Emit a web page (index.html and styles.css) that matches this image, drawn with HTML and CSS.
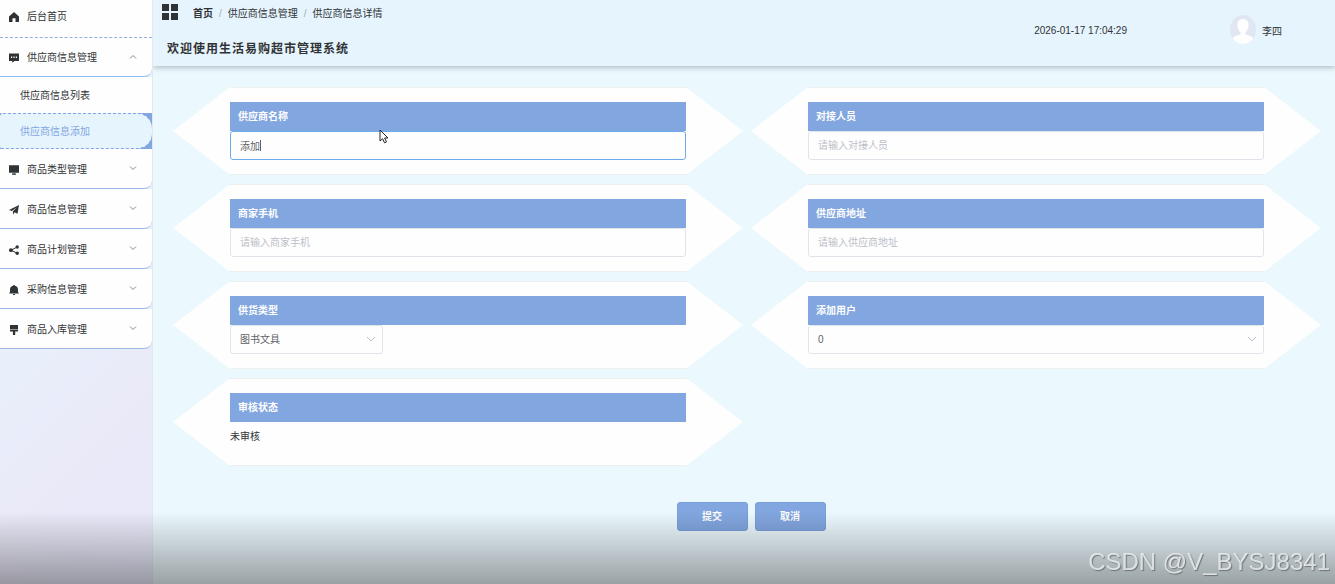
FILE: index.html
```html
<!DOCTYPE html>
<html lang="zh-CN">
<head>
<meta charset="utf-8">
<title>生活易购超市管理系统</title>
<link rel="stylesheet" href="styles.css">
</head>
<body>
<div class="app">
  <aside class="sidebar">
    <nav class="menu">
      <a class="menu-item menu-home" href="#">
        <svg class="menu-icon" viewBox="0 0 10 10"><path d="M5 0 10 4.600V10H6.500V6.300H3.500V10H0V4.600Z"/></svg>
        <span>后台首页</span>
      </a>
      <button class="menu-item menu-group is-open" type="button">
        <svg class="menu-icon" viewBox="0 0 10 10"><path fill-rule="evenodd" d="M0 .5H10V8H5.500L3.200 9.800V8H0ZM2 3.500V5H3.200V3.500ZM4.400 3.500V5H5.600V3.500ZM6.800 3.500V5H8V3.500Z"/></svg>
        <span>供应商信息管理</span>
        <svg class="chevron" viewBox="0 0 8 8"><path d="M1 5.500 4 2.500 7 5.500"/></svg>
      </button>
      <a class="sub-item" href="#">供应商信息列表</a>
      <div class="sub-active"><a class="sub-item" href="#">供应商信息添加</a></div>
      <button class="menu-item menu-group" type="button">
        <svg class="menu-icon" viewBox="0 0 10 10"><path d="M0 .3H10V7.800H0ZM3.500 8.300H6.500L7.200 9.800H2.800Z"/></svg>
        <span>商品类型管理</span>
        <svg class="chevron" viewBox="0 0 8 8"><path d="M1 2.500 4 5.500 7 2.500"/></svg>
      </button>
      <button class="menu-item menu-group" type="button">
        <svg class="menu-icon" viewBox="0 0 10 10"><path d="M10 0 8.500 8.800 5.500 7.200 4.200 9.800 3.800 6.500 8 2.300 2.900 6 0 5Z"/></svg>
        <span>商品信息管理</span>
        <svg class="chevron" viewBox="0 0 8 8"><path d="M1 2.500 4 5.500 7 2.500"/></svg>
      </button>
      <button class="menu-item menu-group" type="button">
        <svg class="menu-icon" viewBox="0 0 10 10"><path d="M8.200 2 2 5.200 8.200 8.200" fill="none" stroke="#303335"/><circle cx="8.200" cy="2" r="1.700"/><circle cx="1.900" cy="5.200" r="1.900"/><circle cx="8.200" cy="8.200" r="1.700"/></svg>
        <span>商品计划管理</span>
        <svg class="chevron" viewBox="0 0 8 8"><path d="M1 2.500 4 5.500 7 2.500"/></svg>
      </button>
      <button class="menu-item menu-group" type="button">
        <svg class="menu-icon" viewBox="0 0 10 10"><path d="M4.300 0H5.700V.8C8 1.200 9 2.800 9 4.500V7L10 8.500H0L1 7V4.500C1 2.800 2 1.200 4.300 .8ZM3.700 9H6.300L5.700 10H4.300Z"/></svg>
        <span>采购信息管理</span>
        <svg class="chevron" viewBox="0 0 8 8"><path d="M1 2.500 4 5.500 7 2.500"/></svg>
      </button>
      <button class="menu-item menu-group" type="button">
        <svg class="menu-icon" viewBox="0 0 10 10"><path d="M1 0H9V4H1ZM1 4.600H9V6.600H6.200V10H3.900V6.600H1Z"/></svg>
        <span>商品入库管理</span>
        <svg class="chevron" viewBox="0 0 8 8"><path d="M1 2.500 4 5.500 7 2.500"/></svg>
      </button>
    </nav>
  </aside>

  <div class="page">
    <header class="header">
      <div class="header-left">
        <div class="crumb-row">
          <svg class="grid-icon" viewBox="0 0 16 16"><path d="M0 0H7V7H0ZM9 0H16V7H9ZM0 9H7V16H0ZM9 9H16V16H9Z"/></svg>
          <nav class="crumbs">
            <a class="crumb-home" href="#">首页</a><span class="slash">/</span><a href="#">供应商信息管理</a><span class="slash">/</span><span>供应商信息详情</span>
          </nav>
        </div>
        <h1 class="title">欢迎使用生活易购超市管理系统</h1>
      </div>
      <time class="clock">2026-01-17 17:04:29</time>
      <div class="user">
        <svg class="avatar" viewBox="0 0 26 29"><ellipse cx="13" cy="14.500" rx="13" ry="14.500" fill="#e1e6f3"/><path fill="#fefefe" d="M13 4C17 4 19 7 18.500 11C18.300 14 17 16 15.500 17.500V19.500C18.500 20.500 22 20.700 23.200 23.700C20.500 27 17 29 13 29S5.500 27 2.800 23.700C4 20.700 7.500 20.500 10.500 19.500V17.500C9 16 7.700 14 7.500 11C7 7 9 4 13 4Z"/></svg>
        <span class="user-name">李四</span>
      </div>
    </header>

    <main class="content">
      <form>
        <div class="form-grid">
          <div class="card">
            <label class="label" for="name">供应商名称</label>
            <div class="field">
              <input class="control is-focus" id="name" type="text" value="添加">
              <span class="caret"></span>
              <svg class="pointer" viewBox="0 0 10 15"><path d="M1 1V12L3.600 9.700 5.500 13.800 7.500 12.900 5.600 9H9Z" fill="#fff" stroke="#222"/></svg>
            </div>
          </div>
          <div class="card">
            <label class="label" for="contact">对接人员</label>
            <div class="field"><input class="control" id="contact" type="text" placeholder="请输入对接人员"></div>
          </div>
          <div class="card">
            <label class="label" for="phone">商家手机</label>
            <div class="field"><input class="control" id="phone" type="text" placeholder="请输入商家手机"></div>
          </div>
          <div class="card">
            <label class="label" for="address">供应商地址</label>
            <div class="field"><input class="control" id="address" type="text" placeholder="请输入供应商地址"></div>
          </div>
          <div class="card">
            <label class="label" for="type">供货类型</label>
            <div class="field field-short">
              <select class="control" id="type"><option>图书文具</option></select>
              <svg class="select-arrow" viewBox="0 0 8 8"><path d="M0 2 4 6 8 2"/></svg>
            </div>
          </div>
          <div class="card">
            <label class="label" for="creator">添加用户</label>
            <div class="field">
              <select class="control" id="creator"><option>0</option></select>
              <svg class="select-arrow" viewBox="0 0 8 8"><path d="M0 2 4 6 8 2"/></svg>
            </div>
          </div>
          <div class="card">
            <label class="label" for="status">审核状态</label>
            <output class="status" id="status">未审核</output>
          </div>
        </div>
        <div class="actions">
          <button class="btn" type="submit">提交</button>
          <button class="btn" type="button">取消</button>
        </div>
      </form>
    </main>
  </div>
</div>
<div class="shade"></div>
<div class="watermark">CSDN @V_BYSJ8341</div>
</body>
</html>
```

FILE: styles.css
```css
* {
  box-sizing: border-box;
}

body {
  margin: 0;
  background: #ebf8fd;
  color: #303335;
  font: 10px/16px "Liberation Sans", "Noto Sans CJK SC", sans-serif;
}

a {
  color: inherit;
  text-decoration: none;
}

button,
input,
select {
  font: inherit;
  color: inherit;
}

.app {
  display: flex;
  min-height: 100vh;
}

/* Sidebar */
.sidebar {
  position: relative;
  z-index: 1;
  flex: 0 0 153px;
  border-right: 1px solid #e2e8ec;
  background: linear-gradient(135deg, #e6f3fc 0%, #e8effb 50%, #eae9f8 75%, #e8e9fb 100%);
}

.menu {
  display: flex;
  flex-direction: column;
}

.menu-item {
  display: flex;
  align-items: center;
  gap: 8px;
  width: 100%;
  padding: 2px 15px 0 9px;
  background: #fefefe;
  text-align: left;
}

.menu-home {
  height: 38px;
  padding-bottom: 5px;
  border-bottom: 1px dashed #93aede;
}

.menu-group {
  height: 40px;
  border: 0;
  border-bottom: 1px solid #9db9e3;
  border-radius: 0 0 8px 0;
}

.is-open {
  height: 39px;
  border-bottom-color: #8cbcf0;
}

.menu-icon {
  width: 10px;
  height: 10px;
  fill: #303335;
}

.chevron {
  width: 8px;
  height: 8px;
  margin: 0 0 3px auto;
  fill: none;
  stroke: #85898e;
}

.sub-item {
  display: flex;
  align-items: center;
  height: 36px;
  padding: 2px 0 0 20px;
  background: #fefefe;
}

.sub-active {
  background: #82a6df;
}

.sub-active .sub-item {
  border: 1px dashed #82a6df;
  border-width: 1px 0;
  border-radius: 3px 15px 15px 3px;
  background: #e6f4fe;
  color: #82a6df;
}

/* Header */
.page {
  flex: 1;
  min-width: 0;
}

.header {
  display: flex;
  padding: 4px 53px 7px 9px;
  background: #e6f4fd;
  box-shadow: 0 1px 6px rgba(0, 0, 0, 0.3);
}

.header-left {
  flex: 1;
}

.crumb-row {
  display: flex;
  gap: 15px;
}

.grid-icon {
  width: 16px;
  height: 16px;
  fill: #303335;
}

.crumbs {
  display: flex;
  padding-top: 2px;
}

.crumb-home {
  font-weight: bold;
}

.slash {
  margin: 0 6px;
  color: #a5adb8;
}

.title {
  margin: 17px 0 0 5px;
  font-size: 12px;
  line-height: 20px;
  font-weight: bold;
  letter-spacing: 1px;
}

.clock {
  margin: 19px 103px 0 0;
}

.user {
  display: flex;
  align-items: center;
  align-self: flex-start;
  gap: 6px;
  padding-top: 11px;
}

.user-name {
  padding-top: 4px;
}

.avatar {
  width: 26px;
  height: 29px;
}

/* Form */
.content {
  padding: 21px 14px 53px 20px;
}

.form-grid {
  display: grid;
  grid-template-columns: 1fr 1fr;
  gap: 9px 8px;
}

.card {
  height: 88px;
  padding: 14px 10%;
  border: solid #eef0f0;
  border-width: 1px 0;
  background: #fefefe;
  clip-path: polygon(10% 0, 90% 0, 100% 50%, 90% 100%, 10% 100%, 0 50%);
}

.label {
  display: block;
  padding: 0 8px;
  background: #82a6df;
  color: #fefefe;
  font-weight: bold;
  line-height: 29px;
}

.field {
  position: relative;
}

.field-short {
  width: 33.5%;
}

.control {
  display: block;
  width: 100%;
  height: 29px;
  padding: 0 9px;
  border: 1px solid #dfe3ea;
  border-radius: 3px;
  outline: 0;
  background: #fefefe;
  color: #606266;
  appearance: none;
}

.control::placeholder {
  color: #bcc0c8;
  opacity: 1;
}

.is-focus {
  border-color: #6dabec;
}

.caret {
  position: absolute;
  left: 30px;
  top: 9px;
  width: 1px;
  height: 11px;
  background: #606266;
}

.pointer {
  position: absolute;
  left: 149px;
  top: -2px;
  width: 10px;
  height: 15px;
}

.select-arrow {
  position: absolute;
  right: 8px;
  top: 10px;
  width: 8px;
  height: 8px;
  fill: none;
  stroke: #bcc0c8;
  pointer-events: none;
}

.status {
  display: block;
  line-height: 29px;
}

.actions {
  display: flex;
  justify-content: center;
  gap: 7px;
  padding: 36px 0 0 8px;
}

.btn {
  width: 71px;
  height: 29px;
  border: 1px solid #7b9fdb;
  border-radius: 3px;
  background: #82a6df;
  color: #fefefe;
  font-weight: bold;
}

/* Overlays */
.shade {
  position: fixed;
  z-index: 2;
  inset: auto 0 0;
  height: 72px;
  background: linear-gradient(rgba(0, 0, 0, 0), rgba(0, 0, 0, 0.12) 35%, rgba(0, 0, 0, 0.35));
  pointer-events: none;
}

.watermark {
  position: fixed;
  z-index: 3;
  right: 5px;
  bottom: 8px;
  color: rgba(235, 238, 240, 0.85);
  font-size: 24px;
  line-height: 28px;
  text-shadow: 1px 1px 1px rgba(70, 75, 80, 0.6);
  pointer-events: none;
}
```
